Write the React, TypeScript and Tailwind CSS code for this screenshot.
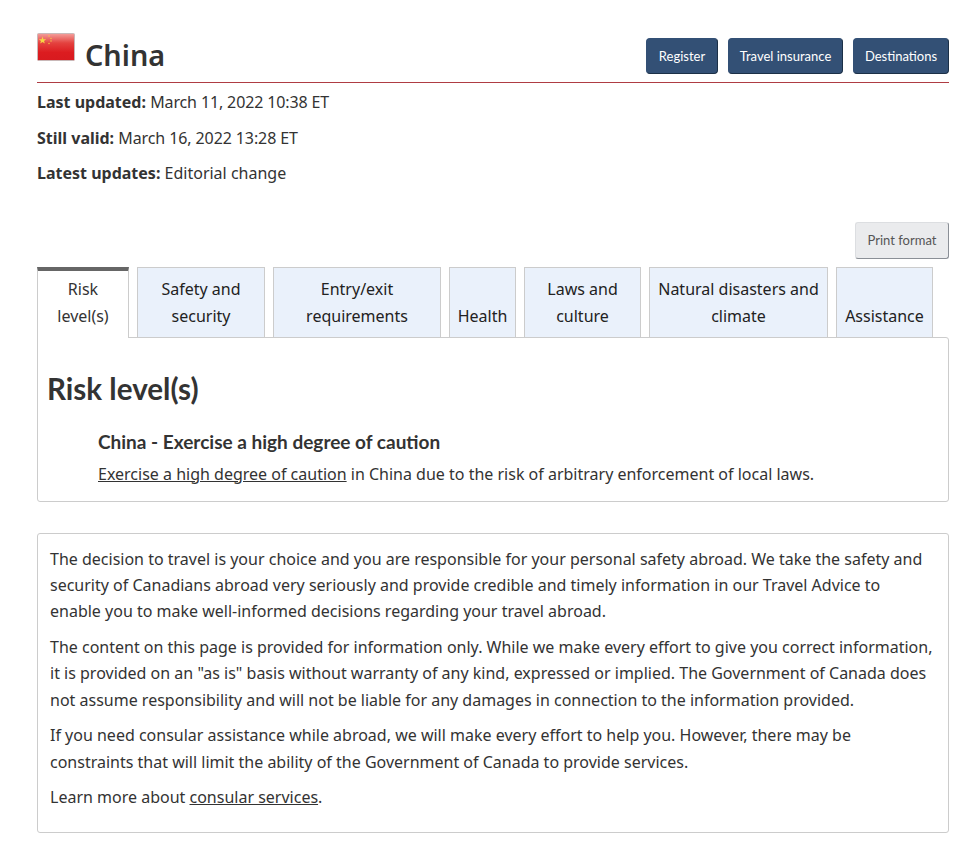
const tabs = [
  { lines: ["Risk", "level(s)"], width: "w-[92px]", active: true },
  { lines: ["Safety and", "security"], width: "w-[128px]" },
  { lines: ["Entry/exit", "requirements"], width: "w-[168px]" },
  { lines: ["Health"], width: "w-[67px]" },
  { lines: ["Laws and", "culture"], width: "w-[117px]" },
  { lines: ["Natural disasters and", "climate"], width: "w-[179px]" },
  { lines: ["Assistance"], width: "w-[97px]" },
];

function Flag() {
  return (
    <svg width="38" height="28" viewBox="0 0 38 28" className="shrink-0">
      <defs>
        <linearGradient id="flag-shine" x1="0" y1="0" x2="0" y2="1">
          <stop offset="0" stopColor="#f4a09c" />
          <stop offset="0.35" stopColor="#e4423f" />
          <stop offset="0.7" stopColor="#dc1c20" />
          <stop offset="1" stopColor="#d81a1f" />
        </linearGradient>
      </defs>
      <rect x="0.5" y="0.5" width="37" height="27" rx="1" fill="url(#flag-shine)" stroke="#c9b8b8" />
      <polygon
        points="5.5,3.5 6.4,6.2 9.2,6.2 7,7.9 7.8,10.5 5.5,9 3.2,10.5 4,7.9 1.8,6.2 4.6,6.2"
        fill="#f6d743"
      />
      <circle cx="12" cy="3" r="0.7" fill="#f6c843" />
      <circle cx="14" cy="5.5" r="0.7" fill="#f6c843" />
      <circle cx="14" cy="8" r="0.7" fill="#f6c843" />
      <circle cx="12" cy="10.5" r="0.7" fill="#f6c843" />
    </svg>
  );
}

function HeaderButton({ label, width }: { label: string; width: string }) {
  return (
    <a
      href="#"
      className={`${width} h-9 pt-[2px] flex items-center justify-center rounded-[4px] bg-[#335075] border border-[#1c3047] border-t-[#335075] border-l-[#335075] font-['Lato',sans-serif] text-[13px] text-white`}
    >
      {label}
    </a>
  );
}

export default function App() {
  return (
    <div className="min-h-[845px] bg-white px-[37px] pt-[27px] pr-[26px] font-['Noto_Sans',sans-serif] text-[16px] text-[#333]">
      <header className="flex items-end justify-between h-[56px] pb-[8px] border-b border-[#af3c43]">
        <h1 className="self-start flex items-start gap-[10px] font-['Noto_Sans',sans-serif] font-semibold text-[28.8px] leading-[38px] text-[#333]">
          <span className="block pt-[6px]">
            <Flag />
          </span>
          <span className="block pt-[9px]">China</span>
        </h1>
        <div className="flex gap-[10px]">
          <HeaderButton label="Register" width="w-[72px]" />
          <HeaderButton label="Travel insurance" width="w-[115px]" />
          <HeaderButton label="Destinations" width="w-[96px]" />
        </div>
      </header>

      <div className="mt-[7px] flex flex-col gap-[11px] leading-[24.5px]">
        <p>
          <strong className="font-bold">Last updated:</strong>{" "}
          <span className="tracking-[-0.13px]">March 11, 2022 10:38 ET</span>
        </p>
        <p>
          <strong className="font-bold">Still valid:</strong>{" "}
          <span className="tracking-[-0.1px]">March 16, 2022 13:28 ET</span>
        </p>
        <p>
          <strong className="font-bold">Latest updates:</strong> Editorial change
        </p>
      </div>

      <div className="mt-[36px] flex justify-end">
        <a
          href="#"
          className="w-[94px] h-[37px] pt-[2px] flex items-center justify-center rounded-[3px] bg-[#eaebed] border border-[#dcdee1] border-r-[#8a8f96] border-b-[#8a8f96] font-['Lato',sans-serif] text-[13px] text-[#555]"
        >
          Print format
        </a>
      </div>

      <div className="mt-[8px] flex gap-2 items-end">
        {tabs.map((tab) => (
          <div
            key={tab.lines[0]}
            className={
              tab.active
                ? `${tab.width} h-[71px] -mb-px relative z-10 flex flex-col justify-end items-center pb-[8px] bg-white border border-b-0 border-[#ccc] border-t-[4px] border-t-[#666] leading-[27px] text-[#333]`
                : `${tab.width} h-[70px] flex flex-col justify-end items-center pb-[7px] bg-[#eaf1fb] border border-b-0 border-[#ccc] leading-[27px] text-[#222]`
            }
          >
            {tab.lines.map((line) => (
              <span key={line} className="whitespace-nowrap">
                {line}
              </span>
            ))}
          </div>
        ))}
      </div>

      <section className="h-[165px] rounded-b-[3px] rounded-tr-[3px] border border-[#ccc] pl-[9px] pt-[31px]">
        <h2 className="font-['Lato',sans-serif] font-bold text-[29.6px] leading-[40px] text-[#333]">
          Risk level(s)
        </h2>
        <div className="mt-[20px] pl-[51px]">
          <h3 className="font-['Lato',sans-serif] font-bold text-[19px] leading-[25px] text-[#333]">
            China - Exercise a high degree of caution
          </h3>
          <p className="mt-[8px] leading-[25px]">
            <a href="#" className="underline">
              Exercise a high degree of caution
            </a>{" "}
            in China due to the risk of arbitrary enforcement of local laws.
          </p>
        </div>
      </section>

      <section className="mt-[31px] h-[300px] rounded-[3px] border border-[#ccc] pl-3 pr-[14px] pt-[12px] leading-[26.4px]">
        <p>
          The decision to travel is your choice and you are responsible for your personal safety abroad. We take the
          safety and security of Canadians abroad very seriously and provide credible and timely information in our
          Travel Advice to enable you to make well-informed decisions regarding your travel abroad.
        </p>
        <p className="mt-[9px]">
          The content on this page is provided for information only. While we make every effort to give you correct
          information, it is provided on an "as is" basis without warranty of any kind, expressed or implied. The
          Government of Canada does not assume responsibility and will not be liable for any damages in connection to
          the information provided.
        </p>
        <p className="mt-[9.3px]">
          If you need consular assistance while abroad, we will make every effort to help you. However, there may be
          constraints that will limit the ability of the Government of Canada to provide services.
        </p>
        <p className="mt-[8.7px]">
          Learn more about{" "}
          <a href="#" className="underline">
            consular services
          </a>
          .
        </p>
      </section>
    </div>
  );
}
